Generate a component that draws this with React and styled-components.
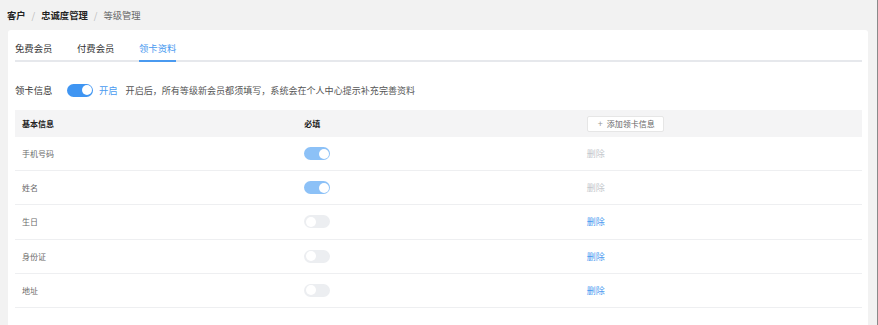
import React from "react";
import styled, { createGlobalStyle } from "styled-components";

const Global = createGlobalStyle`
  html, body { margin: 0; padding: 0; }
  body {
    background: #f2f2f2;
    font-family: "Noto Sans CJK SC", "Noto Sans", sans-serif;
    color: #333;
  }
`;

const Page = styled.div`
  width: 878px;
  height: 325px;
  box-sizing: border-box;
  border-right: 1px solid #8a8a8a;
  overflow: hidden;
  display: flex;
  flex-direction: column;
`;

const Breadcrumb = styled.div`
  height: 30px;
  padding-left: 7px;
  display: flex;
  align-items: center;
  font-size: 9.3px;
  gap: 4px;
`;

const Crumb = styled.span`
  color: ${(p) => (p.$current ? "#666" : "#222")};
  font-weight: ${(p) => (p.$current ? 400 : 700)};
`;

const Sep = styled.span`
  color: #bbb;
  margin: 0 2px;
`;

const Card = styled.div`
  flex: 1;
  margin: 0 9px 0 8px;
  background: #fff;
  border-radius: 3px 3px 0 0;
  padding: 0 6px 0 7px;
  display: flex;
  flex-direction: column;
`;

const TabBar = styled.div`
  display: flex;
  height: 30px;
  border-bottom: 2px solid #e6e8ec;
`;

const Tab = styled.div`
  font-size: 9.35px;
  margin-right: 24.6px;
  padding-top: 11px;
  box-sizing: border-box;
  height: 32px;
  color: ${(p) => (p.$active ? "#4a9af0" : "#333")};
  border-bottom: 2px solid ${(p) => (p.$active ? "#4a9af0" : "transparent")};
  line-height: 14px;
`;

const SwitchRow = styled.div`
  display: flex;
  align-items: center;
  height: 16px;
  margin-top: 20px;
  font-size: 9.35px;
`;

const Label = styled.span`
  color: #333;
  margin-right: 14.5px;
`;

const Toggle = styled.span`
  position: relative;
  display: inline-block;
  width: 26px;
  height: 13px;
  border-radius: 7px;
  background: ${(p) => (p.$on ? (p.$dim ? "#8cc1f7" : "#3f95f2") : "#eceef1")};
  &::after {
    content: "";
    position: absolute;
    top: 1.5px;
    left: ${(p) => (p.$on ? "15px" : "1.5px")};
    width: 10px;
    height: 10px;
    border-radius: 50%;
    background: #fff;
  }
`;

const OnText = styled.span`
  color: #4a9af0;
  margin-left: 6px;
  margin-right: 8px;
`;

const Hint = styled.span`
  color: #555;
  font-size: 9.05px;
`;

const Table = styled.div`
  margin-top: 12px;
  display: flex;
  flex-direction: column;
`;

const HeadRow = styled.div`
  display: grid;
  grid-template-columns: 1fr 1fr 1fr;
  height: 27px;
  align-items: center;
  background: #f4f4f5;
  font-size: 8px;
  font-weight: 700;
  color: #222;
`;

const Row = styled.div`
  display: grid;
  grid-template-columns: 1fr 1fr 1fr;
  height: 34.2px;
  box-sizing: border-box;
  align-items: center;
  border-bottom: 1px solid #eeeff1;
  font-size: 8px;
  color: #6a6a6a;
`;

const Cell = styled.div`
  padding-left: 7px;
  display: flex;
  align-items: center;
`;

const AddButton = styled.div`
  display: inline-flex;
  align-items: center;
  height: 16px;
  box-sizing: border-box;
  padding: 0 8px 0 10px;
  background: #fff;
  border: 1px solid #e6e6e6;
  border-radius: 2px;
  color: #666;
  font-weight: 400;
  font-size: 8px;
  gap: 4px;
`;

const Plus = styled.span`
  color: #999;
  font-size: 9px;
`;

const Delete = styled.span`
  font-size: 9px;
  color: ${(p) => (p.$disabled ? "#c4c7cc" : "#4a9af0")};
`;

const rows = [
  { name: "手机号码", on: true, fixed: true },
  { name: "姓名", on: true, fixed: true },
  { name: "生日", on: false, fixed: false },
  { name: "身份证", on: false, fixed: false },
  { name: "地址", on: false, fixed: false },
];

export default function App() {
  return (
    <>
      <Global />
      <Page>
        <Breadcrumb>
          <Crumb>客户</Crumb>
          <Sep>/</Sep>
          <Crumb>忠诚度管理</Crumb>
          <Sep>/</Sep>
          <Crumb $current>等级管理</Crumb>
        </Breadcrumb>
        <Card>
          <TabBar>
            <Tab>免费会员</Tab>
            <Tab>付费会员</Tab>
            <Tab $active>领卡资料</Tab>
          </TabBar>
          <SwitchRow>
            <Label>领卡信息</Label>
            <Toggle $on />
            <OnText>开启</OnText>
            <Hint>开启后，所有等级新会员都须填写，系统会在个人中心提示补充完善资料</Hint>
          </SwitchRow>
          <Table>
            <HeadRow>
              <Cell>基本信息</Cell>
              <Cell>必填</Cell>
              <Cell>
                <AddButton>
                  <Plus>+</Plus>添加领卡信息
                </AddButton>
              </Cell>
            </HeadRow>
            {rows.map((r) => (
              <Row key={r.name}>
                <Cell>{r.name}</Cell>
                <Cell>
                  <Toggle $on={r.on} $dim />
                </Cell>
                <Cell>
                  <Delete $disabled={r.fixed}>删除</Delete>
                </Cell>
              </Row>
            ))}
          </Table>
        </Card>
      </Page>
    </>
  );
}
